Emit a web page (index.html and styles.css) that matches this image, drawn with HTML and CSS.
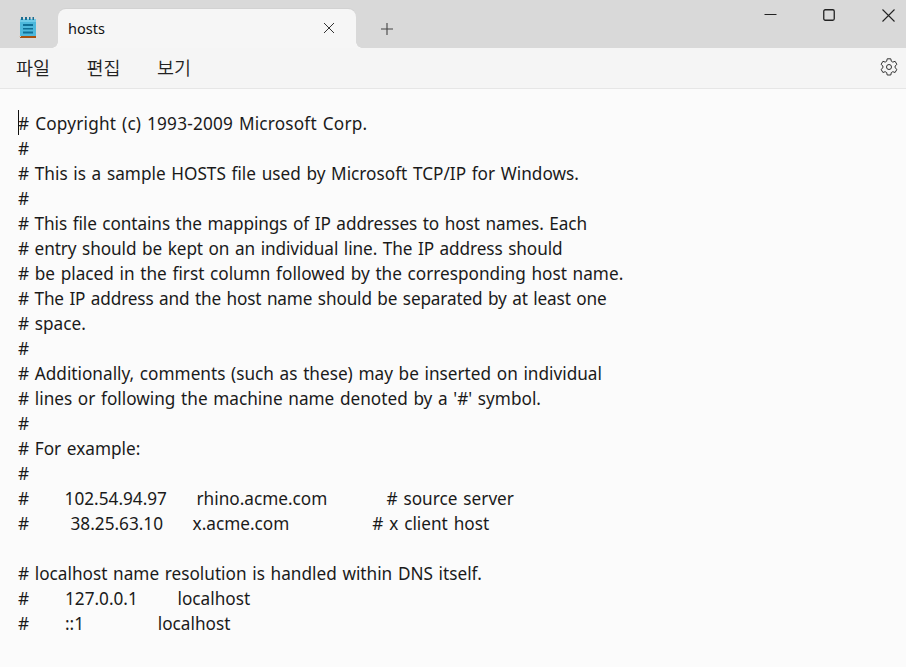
FILE: index.html
```html
<!DOCTYPE html>
<html lang="ko">
<head>
<meta charset="utf-8">
<title>hosts</title>
<link rel="stylesheet" href="styles.css">
</head>
<body>
<div class="window">
  <header class="titlebar">
    <svg class="app-icon" width="20" height="24" viewBox="0 0 20 24">
      <rect x="2" y="3" width="16" height="17" fill="#4db8dc"/>
      <rect x="2" y="3" width="16" height="3" fill="#6fcbe8"/>
      <rect x="2" y="20" width="16" height="2" fill="#a8500f"/>
      <rect x="1" y="20" width="2" height="1" fill="#d8c8b8"/>
      <path d="M3 1h2v3H3zM7 1h2v3H7zM11 1h1.500v3H11zM14.500 1H16v3h-1.500z" fill="#1d6d90"/>
      <rect x="5" y="8" width="10" height="2" fill="#0f6f96"/>
      <rect x="5" y="12" width="10" height="1.500" fill="#0f6f96"/>
      <rect x="5" y="15.500" width="10" height="2" fill="#0f6f96"/>
    </svg>
    <div class="tab">
      <span class="tab-title">hosts</span>
      <svg class="tab-close" width="12" height="12" viewBox="0 0 12 12"><path d="M1 1l10 10M11 1L1 11" stroke="#333" stroke-width="1" fill="none"/></svg>
    </div>
    <svg class="new-tab" width="14" height="14" viewBox="0 0 14 14"><path d="M7 1v12M1 7h12" stroke="#444" stroke-width="1.100" fill="none"/></svg>
    <div class="controls">
      <svg width="13" height="12" viewBox="0 0 13 12"><path d="M0.500 5.500h12" stroke="#222" stroke-width="1" fill="none"/></svg>
      <svg width="12" height="12" viewBox="0 0 12 12"><rect x="0.750" y="0.750" width="10.500" height="10.500" rx="1.500" stroke="#222" stroke-width="1.300" fill="none"/></svg>
      <svg class="close" width="13" height="13" viewBox="0 0 13 13"><path d="M0.500 0.500l12 12M12.500 0.500l-12 12" stroke="#222" stroke-width="1.100" fill="none"/></svg>
    </div>
  </header>
  <nav class="menubar">
    <span class="menu-item">파일</span>
    <span class="menu-item">편집</span>
    <span class="menu-item">보기</span>
    <svg class="settings" width="20" height="20" viewBox="0 0 20 20"><path d="M8.200 1.800h3.600l.5 2.400 1.500.9 2.300-.8 1.800 3.100-1.800 1.600v1.800l1.800 1.600-1.800 3.100-2.300-.8-1.500.9-.5 2.400H8.200l-.5-2.400-1.500-.9-2.300.8-1.800-3.100 1.800-1.600V9L2.100 7.400l1.800-3.100 2.300.8 1.500-.9z" stroke="#333" stroke-width="1" stroke-linejoin="round" fill="none"/><circle cx="10" cy="10" r="2.500" stroke="#333" stroke-width="1" fill="none"/></svg>
  </nav>
  <main class="editor"><span class="caret"></span><pre class="text"><span class="loose"># Copyright (c) 1993-2009 Microsoft Corp.</span>
#
# This is a sample HOSTS file used by Microsoft TCP/IP for Windows.
#
<span class="tight"># This file contains the mappings of IP addresses to host names. Each</span>
<span class="tight"># entry should be kept on an individual line. The IP address should</span>
# be placed in the first column followed by the corresponding host name.
<span class="tighter"># The IP address and the host name should be separated by at least one</span>
# space.
#
# Additionally, comments (such as these) may be inserted on individual
# lines or following the machine name denoted by a '#' symbol.
#
# For example:
#
<span class="row">#      102.54.94.97     rhino.acme.com          # source server</span>
<span class="row">#       38.25.63.10     x.acme.com              # x client host</span>

# localhost name resolution is handled within DNS itself.
#	127.0.0.1       localhost
#	::1             localhost</pre></main>
</div>
</body>
</html>
```
FILE: styles.css
```css
html, body {
  margin: 0;
  height: 100%;
  overflow: hidden;
}
body {
  font-family: "Noto Sans", "Noto Sans CJK KR", sans-serif;
  color: #1a1a1a;
  background: #fbfbfb;
}
.window {
  display: flex;
  flex-direction: column;
  height: 100%;
}
.titlebar {
  display: flex;
  align-items: flex-end;
  height: 48px;
  background: #d9d9d9;
  flex: none;
}
.app-icon {
  margin: 0 0 8px 18px;
  flex: none;
}
.tab {
  position: relative;
  display: flex;
  align-items: center;
  justify-content: space-between;
  box-sizing: border-box;
  width: 298px;
  height: 39px;
  margin-left: 20px;
  padding: 0 21px 0 10px;
  background: #f6f6f6;
  border-radius: 8px 8px 0 0;
  box-shadow: 0 -1px 0 #d2d2d2;
}
.tab::before,
.tab::after {
  content: "";
  position: absolute;
  bottom: 0;
  width: 6px;
  height: 6px;
}
.tab::before {
  left: -6px;
  background: radial-gradient(circle at 0 0, transparent 5.500px, #f6f6f6 6px);
}
.tab::after {
  right: -6px;
  background: radial-gradient(circle at 100% 0, transparent 5.500px, #f6f6f6 6px);
}
.tab-title {
  font-size: 14.500px;
  color: #111;
  position: relative;
  top: -1px;
}
.tab-close {
  position: relative;
  top: -1px;
}
.new-tab {
  margin: 0 0 12px 24px;
}
.controls {
  display: flex;
  align-items: flex-start;
  gap: 46px;
  align-self: flex-start;
  margin: 9px 11px 0 auto;
}
.close {
  margin-left: 1px;
}
.menubar {
  display: flex;
  align-items: center;
  gap: 36.500px;
  box-sizing: border-box;
  height: 41px;
  flex: none;
  padding: 0 7px 2px 16px;
  background: #f5f5f5;
  border-bottom: 1px solid #e6e6e6;
}
.menu-item {
  font-family: "Noto Sans CJK KR", sans-serif;
  font-size: 18.500px;
  font-weight: 350;
  color: #222;
}
.settings {
  margin-left: auto;
}
.editor {
  position: relative;
  flex: 1;
  padding: 22px 18px 0;
  background: #fbfbfb;
}
.caret {
  position: absolute;
  left: 18px;
  top: 21px;
  width: 1px;
  height: 25px;
  background: #111;
}
.text {
  margin: 0;
  font: 17.200px/25px "Noto Sans", sans-serif;
  word-spacing: 1.200px;
  tab-size: 47px;
  white-space: pre;
  color: #1a1a1a;
}
.loose {
  letter-spacing: 0.200px;
}
.tight {
  letter-spacing: -0.090px;
}
.tighter {
  letter-spacing: -0.150px;
}
.row {
  word-spacing: 1.450px;
}
```
